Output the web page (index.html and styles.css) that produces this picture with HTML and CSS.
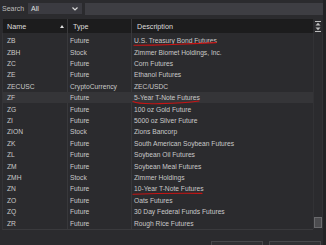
FILE: index.html
```html
<!DOCTYPE html>
<html lang="en">
<head>
  <meta charset="UTF-8" />
  <title>Symbol Search</title>
  <link rel="stylesheet" href="styles.css">
</head>
<body>
  <div class="window">
    <div class="toolbar">
      <span class="search-label">Search</span>
      <div class="select">
        <span>All</span>
        <svg class="chev" width="6" height="4" viewBox="0 0 6 4"><path d="M0.5 0.5 L3 3 L5.5 0.5" fill="none" stroke="#d8d8d8" stroke-width="1.2"/></svg>
      </div>
      <div class="search-input"></div>
    </div>

    <div class="main">
      <div class="table">
        <div class="thead">
          <div class="th th-name">Name <span class="sort-up"></span></div>
          <div class="th">Type</div>
          <div class="th">Description</div>
        </div>
        <div class="tbody">
          <div class="tr"><div>ZB</div><div>Future</div><div>U.S. Treasury Bond Futures</div></div>
          <div class="tr"><div>ZBH</div><div>Stock</div><div>Zimmer Biomet Holdings, Inc.</div></div>
          <div class="tr"><div>ZC</div><div>Future</div><div>Corn Futures</div></div>
          <div class="tr"><div>ZE</div><div>Future</div><div>Ethanol Futures</div></div>
          <div class="tr"><div>ZECUSC</div><div>CryptoCurrency</div><div>ZEC/USDC</div></div>
          <div class="tr selected"><div>ZF</div><div>Future</div><div>5-Year T-Note Futures</div></div>
          <div class="tr"><div>ZG</div><div>Future</div><div>100 oz Gold Future</div></div>
          <div class="tr"><div>ZI</div><div>Future</div><div>5000 oz Silver Future</div></div>
          <div class="tr"><div>ZION</div><div>Stock</div><div>Zions Bancorp</div></div>
          <div class="tr"><div>ZK</div><div>Future</div><div>South American Soybean Futures</div></div>
          <div class="tr"><div>ZL</div><div>Future</div><div>Soybean Oil Futures</div></div>
          <div class="tr"><div>ZM</div><div>Future</div><div>Soybean Meal Futures</div></div>
          <div class="tr"><div>ZMH</div><div>Stock</div><div>Zimmer Holdings</div></div>
          <div class="tr"><div>ZN</div><div>Future</div><div>10-Year T-Note Futures</div></div>
          <div class="tr"><div>ZO</div><div>Future</div><div>Oats Futures</div></div>
          <div class="tr"><div>ZQ</div><div>Future</div><div>30 Day Federal Funds Futures</div></div>
          <div class="tr"><div>ZR</div><div>Future</div><div>Rough Rice Futures</div></div>
        </div>
      </div>
      <div class="scrollbar">
        <div class="scroll-btns">
          <svg width="6" height="5" viewBox="0 0 6 5"><rect x="0" y="0" width="6" height="1" fill="#bdbdbd"/><path d="M0.5 4.5 L3 1.8 L5.5 4.5 Z" fill="#bdbdbd"/></svg>
          <svg width="6" height="5" viewBox="0 0 6 5"><path d="M0.5 0.5 L3 3.2 L5.5 0.5 Z" fill="#bdbdbd"/><rect x="0" y="4" width="6" height="1" fill="#bdbdbd"/></svg>
        </div>
        <div class="track">
          <div class="thumb"></div>
        </div>
      </div>
    </div>

    <div class="footer">
      <div class="btn"></div>
      <div class="btn"></div>
    </div>
  </div>
  <div class="edge"></div>

  <!-- hand drawn marks over the descriptions -->
  <svg class="marks" width="326" height="245" viewBox="0 0 326 245">
    <path d="M134 45.3 Q170 45 216 42.6" fill="none" stroke="#c81414" stroke-width="1.1" stroke-linecap="round"/>
    <path d="M133 101.6 Q139 104.4 160 103.6 Q185 103 199 101" fill="none" stroke="#c81414" stroke-width="1.1" stroke-linecap="round"/>
    <path d="M133 194.3 Q165 193 202 193.4" fill="none" stroke="#c81414" stroke-width="1.1" stroke-linecap="round"/>
  </svg>
</body>
</html>
```

FILE: styles.css
```css
body {
  margin: 0;
  background: #2b2b2e;
  font-family: "Liberation Sans", Arial, sans-serif;
  font-size: 6.7px;
  color: #c9c9c9;
  width: 326px;
  height: 245px;
  overflow: hidden;
  position: relative;
}
.window {
  width: 323px;
}
.toolbar {
  height: 19px;
  display: flex;
  align-items: center;
  padding-left: 2px;
}
.search-label {
  width: 26px;
  font-size: 7px;
  color: #bdbdbd;
  margin-top: -2px;
}
.select {
  width: 54px;
  height: 11px;
  margin-top: -2px;
  background: #3b3b41;
  display: flex;
  align-items: center;
  justify-content: space-between;
  padding: 0 3px;
  box-sizing: border-box;
  color: #e0e0e0;
  font-size: 7px;
}
.chev {
  margin-right: 1px;
}
.search-input {
  flex: 1;
  height: 12px;
  margin: -2px 0 0 3px;
  background: #3e3e43;
}
.main {
  display: flex;
  padding-left: 3px;
}
.table {
  width: 310px;
}
.thead {
  height: 14px;
  background: #1c1c1d;
  display: grid;
  grid-template-columns: 64px 64px 1fr;
  font-size: 7.2px;
  color: #dcdcdc;
}
.th {
  display: flex;
  align-items: center;
  padding-left: 5px;
  border-left: 1px solid #38383a;
}
.th:first-child {
  border-left: none;
  padding-left: 4px;
}
.th-name {
  justify-content: space-between;
  padding-right: 3px;
}
.sort-up {
  width: 0;
  height: 0;
  border-left: 2.5px solid transparent;
  border-right: 2.5px solid transparent;
  border-bottom: 3px solid #e0e0e0;
}
.tbody {
  padding-top: 2px;
  border-bottom: 1px solid #3a3a3d;
  border-left: 1px solid #343437;
  margin-left: -1px;
  background:
    linear-gradient(#38383b, #38383b) 64px 0 / 1px 100% no-repeat,
    linear-gradient(#38383b, #38383b) 128px 0 / 1px 100% no-repeat;
}
.tr {
  height: 11.42px;
  display: grid;
  grid-template-columns: 64px 64px 1fr;
  align-items: center;
}
.tr div {
  padding-left: 3px;
  white-space: nowrap;
}
.tr div:first-child {
  padding-left: 4px;
}
.tr.selected {
  background: #353538;
}
.scrollbar {
  width: 10px;
}
.scroll-btns {
  height: 14px;
  display: flex;
  flex-direction: column;
  align-items: center;
  justify-content: space-around;
  padding: 1px 0;
  box-sizing: border-box;
}
.track {
  height: 196px;
  border-left: 1px solid #323235;
  border-right: 1px solid #323235;
  display: flex;
  flex-direction: column;
  justify-content: flex-end;
  padding-bottom: 1px;
  box-sizing: border-box;
}
.thumb {
  height: 11px;
  margin: 0 0 0 0;
  background: #4c4c4f;
  border: 1px solid #6a6a6d;
  box-sizing: border-box;
}
.footer {
  display: flex;
  gap: 6px;
  justify-content: flex-end;
  padding: 11px 2px 0 0;
}
.btn {
  width: 52px;
  height: 12px;
  background: #303033;
  border: 1px solid #48484b;
  box-sizing: border-box;
}
.edge {
  position: absolute;
  top: 0;
  right: 0;
  width: 3px;
  height: 245px;
  background: #222224;
}
.marks {
  position: absolute;
  top: 0;
  left: 0;
  pointer-events: none;
}
```
